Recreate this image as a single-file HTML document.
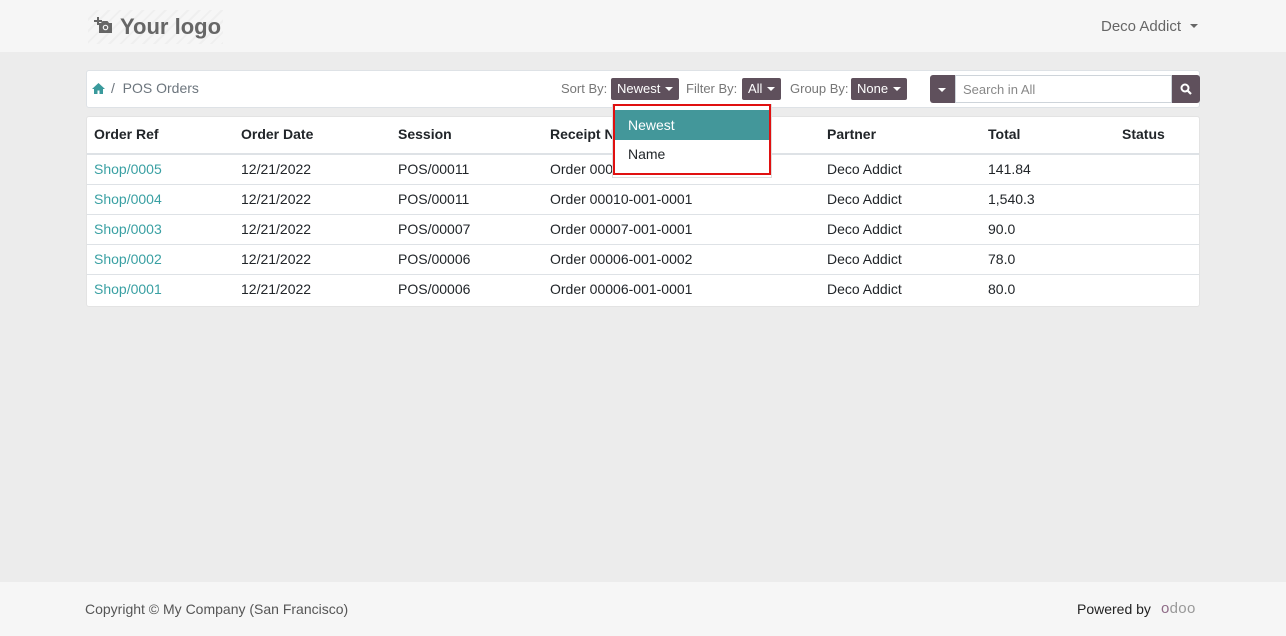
<!DOCTYPE html>
<html><head><meta charset="utf-8"><style>
*{box-sizing:border-box;margin:0;padding:0}
body{width:1286px;height:636px;background:#ececec;font-family:"Liberation Sans",sans-serif;font-size:14px;color:#212529;position:relative;overflow:hidden}
.abs{position:absolute}
header{position:absolute;left:0;top:0;width:1286px;height:52px;background:#f6f6f6}
footer{position:absolute;left:0;top:582px;width:1286px;height:54px;background:#f6f6f6}
.bar{left:86px;top:70px;width:1114px;height:38px;background:#fff;border:1px solid #dee2e6;border-radius:3px}
.btn{position:absolute;background:#5f505c;color:#fff;font-size:13px;height:22px;line-height:22px;padding:0 6px;border-radius:2px}
.caret{display:inline-block;width:0;height:0;border-left:4px solid transparent;border-right:4px solid transparent;border-top:4px solid #fff;vertical-align:middle;margin-left:5px;margin-top:-2px}
.card{left:86px;top:116px;width:1114px;height:191px;background:#fff;border-radius:3px;border:1px solid #e3e3e3}
.row{position:absolute;left:0;width:1112px;height:30px;border-top:1px solid #dee2e6}
.row span,.hd span{position:absolute;top:6px}
.hd span{font-weight:bold;top:9px}
a{color:#3aa0a3;text-decoration:none}
.lbl{position:absolute;top:10px;color:#777;font-size:13px}
</style></head><body>
<header>
  <div class="abs" style="left:88px;top:10px;width:135px;height:34px;background:repeating-linear-gradient(135deg,#f6f6f6 0 6px,#efefef 6px 8px)"></div>
  <svg class="abs" style="left:94px;top:17px" width="20" height="17" viewBox="0 0 20 17"><path d="M3 0v3H0v2h3v3h2V5h3V3H5V0z" fill="#666"/><path d="M5 6h2l1.5-2h5L15 6h3v10H5z" fill="#666"/><circle cx="11.5" cy="10.5" r="2.8" fill="#f6f6f6"/><circle cx="11.5" cy="10.5" r="1.6" fill="#666"/></svg>
  <div class="abs" style="left:120px;top:14px;font-size:22px;font-weight:bold;color:#666">Your logo</div>
  <div class="abs" style="left:1101px;top:18px;color:#666;font-size:15px">Deco Addict <span class="caret" style="border-top-color:#666"></span></div>
</header>
<div class="abs bar">
  <svg class="abs" style="left:5px;top:12px" width="13" height="11" viewBox="0 0 13 11"><path d="M6.5 0L0 6h2v5h3.5V7.5h2V11H11V6h2z" fill="#3a9a9c"/></svg>
  <div class="abs" style="left:24px;top:9px;color:#6c757d;font-size:14px">/&nbsp;&nbsp;POS Orders</div>
  <div class="lbl" style="left:474px">Sort By:</div>
  <div class="btn" style="left:524px;top:7px">Newest<span class="caret"></span></div>
  <div class="lbl" style="left:599px">Filter By:</div>
  <div class="btn" style="left:655px;top:7px">All<span class="caret"></span></div>
  <div class="lbl" style="left:703px">Group By:</div>
  <div class="btn" style="left:764px;top:7px">None<span class="caret"></span></div>
  <div class="abs" style="left:843px;top:4px;width:25px;height:28px;background:#5f505c;border-radius:3px 0 0 3px"><span class="caret" style="position:absolute;left:8px;top:13px;margin:0"></span></div>
  <div class="abs" style="left:868px;top:4px;width:217px;height:28px;border:1px solid #ced4da;color:#888;font-size:13px;padding:6px 7px">Search in All</div>
  <div class="abs" style="left:1085px;top:4px;width:28px;height:28px;background:#5f505c;border-radius:0 3px 3px 0"><svg style="position:absolute;left:8px;top:8px" width="12" height="12" viewBox="0 0 12 12"><circle cx="5" cy="5" r="3.5" stroke="#fff" stroke-width="2" fill="none"/><path d="M7.5 7.5L11 11" stroke="#fff" stroke-width="2.2"/></svg></div>
</div>
<div class="abs card">
  <div class="hd" style="position:absolute;left:0;top:0;width:1112px;height:37px">
    <span style="left:7px">Order Ref</span><span style="left:154px">Order Date</span><span style="left:311px">Session</span><span style="left:463px">Receipt Number</span><span style="left:740px">Partner</span><span style="left:901px">Total</span><span style="left:1035px">Status</span>
  </div>
  <div class="row" style="top:36px;border-top:2px solid #dee2e6"><span style="left:7px"><a>Shop/0005</a></span><span style="left:154px">12/21/2022</span><span style="left:311px">POS/00011</span><span style="left:463px">Order 00011-001-0001</span><span style="left:740px">Deco Addict</span><span style="left:901px">141.84</span></div>
  <div class="row" style="top:67px"><span style="left:7px"><a>Shop/0004</a></span><span style="left:154px">12/21/2022</span><span style="left:311px">POS/00011</span><span style="left:463px">Order 00010-001-0001</span><span style="left:740px">Deco Addict</span><span style="left:901px">1,540.3</span></div>
  <div class="row" style="top:97px"><span style="left:7px"><a>Shop/0003</a></span><span style="left:154px">12/21/2022</span><span style="left:311px">POS/00007</span><span style="left:463px">Order 00007-001-0001</span><span style="left:740px">Deco Addict</span><span style="left:901px">90.0</span></div>
  <div class="row" style="top:127px"><span style="left:7px"><a>Shop/0002</a></span><span style="left:154px">12/21/2022</span><span style="left:311px">POS/00006</span><span style="left:463px">Order 00006-001-0002</span><span style="left:740px">Deco Addict</span><span style="left:901px">78.0</span></div>
  <div class="row" style="top:157px"><span style="left:7px"><a>Shop/0001</a></span><span style="left:154px">12/21/2022</span><span style="left:311px">POS/00006</span><span style="left:463px">Order 00006-001-0001</span><span style="left:740px">Deco Addict</span><span style="left:901px">80.0</span></div>
</div>
<div class="abs" style="left:612px;top:104px;width:160px;height:74px;background:#fff;border:1px solid #ddd"></div>
<div class="abs" style="left:613px;top:104px;width:158px;height:71px;border:2px solid #e01010"></div>
<div class="abs" style="left:615px;top:110px;width:154px;height:30px;background:#43979a;color:#fff;padding:7px 13px">Newest</div>
<div class="abs" style="left:628px;top:146px">Name</div>
<footer>
  <div class="abs" style="left:85px;top:19px;color:#555">Copyright © My Company (San Francisco)</div>
  <div class="abs" style="left:1077px;top:19px;color:#222">Powered by</div>
  <div class="abs" style="left:1161px;top:18px;color:#999;font-size:15px;letter-spacing:0.3px"><span style="color:#8f6c88">o</span>doo</div>
</footer>
</body></html>
